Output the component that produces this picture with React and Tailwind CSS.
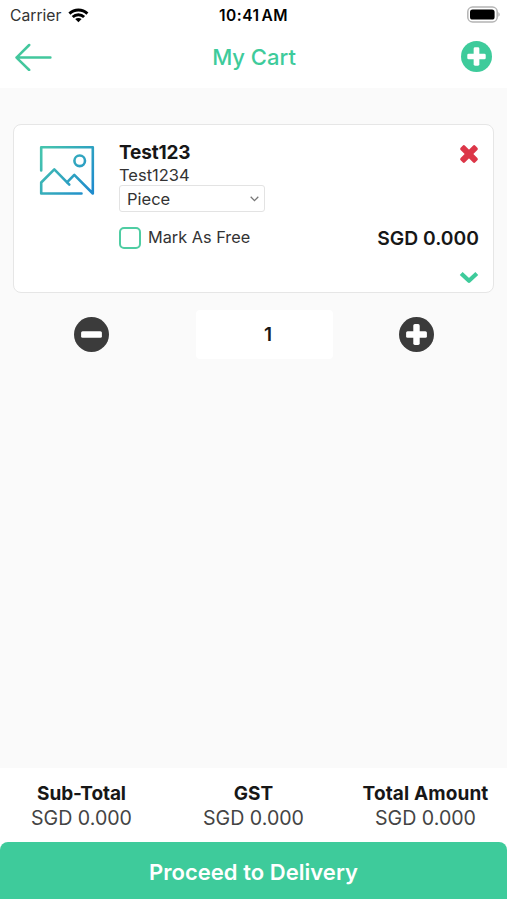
import { useState } from "react";

const totals = [
  { label: "Sub-Total", value: "SGD 0.000", track: "tracking-[-0.1px]", width: "w-[163px]" },
  { label: "GST", value: "SGD 0.000", track: "tracking-[0.1px]", width: "w-[181px]" },
  { label: "Total Amount", value: "SGD 0.000", track: "tracking-[0.12px]", width: "w-[163px]" },
];

function StatusBar() {
  return (
    <div className="flex h-[30px] items-center justify-between pl-[10px] pr-[7px] text-black">
      <div className="flex w-[120px] items-center gap-[7px]">
        <span className="pt-[1px] text-[15.7px] leading-5 text-[#333]">Carrier</span>
        <svg width="21" height="15" viewBox="0 0 21 15" fill="none" stroke="#000" strokeWidth="2.9">
          <path d="M1.4 5.6C6.6.7 14.2.7 19.4 5.6" />
          <path d="M4.7 9C7.9 5.9 12.9 5.9 16.1 9" />
          <path d="M10.4 14.2L7.2 11.1C9 9.5 11.8 9.5 13.6 11.1Z" fill="#000" stroke="none" />
        </svg>
      </div>
      <span className="pr-[3px] pt-[1px] text-[15.5px] font-semibold leading-5 tracking-[0.5px]">10:41<span className="pl-[2px]">AM</span></span>
      <div className="flex w-[120px] justify-end pb-[2px]">
        <svg width="34" height="17" viewBox="0 0 34 17">
          <rect x="1.8" y="1" width="29.4" height="15" rx="4.8" fill="#fff" stroke="#b4b4b4" strokeWidth="1.5" />
          <rect x="4" y="3.4" width="24.6" height="10.2" rx="2.6" fill="#000" />
          <path d="M32.3 6.3C34.2 7 34.2 10 32.3 10.7Z" fill="#b4b4b4" />
        </svg>
      </div>
    </div>
  );
}

function CircleIcon({ size, color, minus }) {
  return (
    <svg width={size} height={size} viewBox="0 0 36 36">
      <circle cx="18" cy="18" r="18" fill={color} />
      <rect x="7.3" y="14.7" width="21.4" height="6.6" rx="1.6" fill="#fff" />
      {!minus && <rect x="14.7" y="7.3" width="6.6" height="21.4" rx="1.6" fill="#fff" />}
    </svg>
  );
}

function PictureIcon() {
  return (
    <svg width="56" height="51" viewBox="0 0 56 51" fill="none" stroke="url(#pic)" strokeWidth="2.6" strokeLinecap="round" strokeLinejoin="round">
      <defs>
        <linearGradient id="pic" x1="0" y1="12" x2="50" y2="48" gradientUnits="userSpaceOnUse">
          <stop offset="0" stopColor="#45c3ae" />
          <stop offset="1" stopColor="#1f8ccd" />
        </linearGradient>
      </defs>
      <path d="M2.2 25.5V2.3H53.8V48.5L35.3 29.8L28.2 37.2" />
      <path d="M42.5 48.5H2.2V37.5L15.3 24.3L30.3 39.6" />
      <circle cx="40.7" cy="15.8" r="5.3" />
    </svg>
  );
}

export default function App() {
  const [qty, setQty] = useState(1);
  const [free, setFree] = useState(false);

  return (
    <div className="flex h-[900px] w-[507px] flex-col overflow-hidden bg-[#fafafa] font-['Inter','Liberation_Sans',sans-serif] text-[#171717]">
      <header className="h-[88px] shrink-0 bg-white">
        <StatusBar />
        <div className="flex h-[53px] items-center justify-between pl-[14px] pr-[15px]">
          <button>
            <svg width="38" height="28" viewBox="0 0 38 28" fill="none" stroke="#43c79d" strokeWidth="2.5" strokeLinecap="round" strokeLinejoin="round">
              <path d="M36.4 14.6H2.5M15.2 2L2.5 14.6L15.2 27" />
            </svg>
          </button>
          <h1 className="pl-[2px] pt-[1px] text-[22px] font-medium leading-7 text-[#3ecb9b]">My Cart</h1>
          <button className="pl-[7px]">
            <CircleIcon size={31} color="#3ecb9b" />
          </button>
        </div>
      </header>

      <main className="flex-1 pl-[13px] pr-[13px] pt-[36px]">
        <section className="flex h-[169px] rounded-[8px] border border-[#e6e6e6] bg-white pl-[25px] pr-[14px]">
          <div className="w-[80px] shrink-0 pt-[20px]">
            <PictureIcon />
          </div>
          <div className="flex flex-1 flex-col items-start">
            <h2 className="mt-[16px] text-[19px] font-bold leading-6 tracking-[-0.15px]">Test123</h2>
            <p className="text-[16.5px] leading-[20px] text-[#333]">Test1234</p>
            <button className="flex h-[27px] w-[146px] items-center justify-between rounded-[3px] border border-[#e3e3e3] pl-[7px] pr-[5px] text-[16.5px] text-[#333]">
              <span className="pt-[1px]">Piece</span>
              <svg width="9" height="6" viewBox="0 0 9 6" fill="none" stroke="#777" strokeWidth="1.3">
                <path d="M.7.8L4.5 4.6L8.3.8" />
              </svg>
            </button>
            <button onClick={() => setFree(!free)} className="mt-[15px] flex items-center gap-[7px]">
              <span className={free ? "size-[22px] rounded-[5px] border-2 border-[#4fcda3] bg-[#4fcda3]" : "size-[22px] rounded-[5px] border-2 border-[#4fcda3]"}></span>
              <span className="pb-[1px] text-[16.3px] leading-[21px] text-[#333]">Mark As Free</span>
            </button>
          </div>
          <div className="flex shrink-0 flex-col items-end">
            <svg className="mt-[19px]" width="20" height="20" viewBox="0 0 20 20" fill="#dc3648">
              <rect x="-0.4" y="6.9" width="20.8" height="6.2" rx="1.7" transform="rotate(45 10 10)" />
              <rect x="-0.4" y="6.9" width="20.8" height="6.2" rx="1.7" transform="rotate(-45 10 10)" />
            </svg>
            <span className="mt-[62px] text-[19.3px] font-semibold leading-6">SGD 0.000</span>
            <svg className="mt-[21px]" width="20" height="13" viewBox="0 0 20 13" fill="none" stroke="#3ecb9b" strokeWidth="4.2" strokeLinejoin="round">
              <path d="M2.2 2.5L10 9.7L17.8 2.5" />
            </svg>
          </div>
        </section>

        <div className="mt-[17px] flex h-[49px] items-center pl-[61px]">
          <button onClick={() => setQty(Math.max(1, qty - 1))}>
            <CircleIcon size={35} color="#3b3b3b" minus />
          </button>
          <div className="ml-[87px] flex h-[49px] w-[137px] items-center justify-center rounded-[4px] bg-white pl-[7px] pt-[1px] text-[19px] font-semibold">{qty}</div>
          <button onClick={() => setQty(qty + 1)} className="ml-[66px]">
            <CircleIcon size={35} color="#3b3b3b" />
          </button>
        </div>
      </main>

      <footer className="shrink-0 bg-white pb-[1px] pt-[13px]">
        <div className="flex h-[61px]">
          {totals.map((item) => (
            <div key={item.label} className={"flex flex-col items-center " + item.width}>
              <span className={"text-[19px] font-bold leading-[25px] " + item.track}>{item.label}</span>
              <span className="text-[19.6px] leading-[25px] text-[#444]">{item.value}</span>
            </div>
          ))}
        </div>
        <button className="h-[57px] w-full rounded-t-[8px] bg-[#3ecb9b] pt-[3px] text-[22px] font-semibold tracking-[0.03px] text-white">Proceed to Delivery</button>
      </footer>
    </div>
  );
}
